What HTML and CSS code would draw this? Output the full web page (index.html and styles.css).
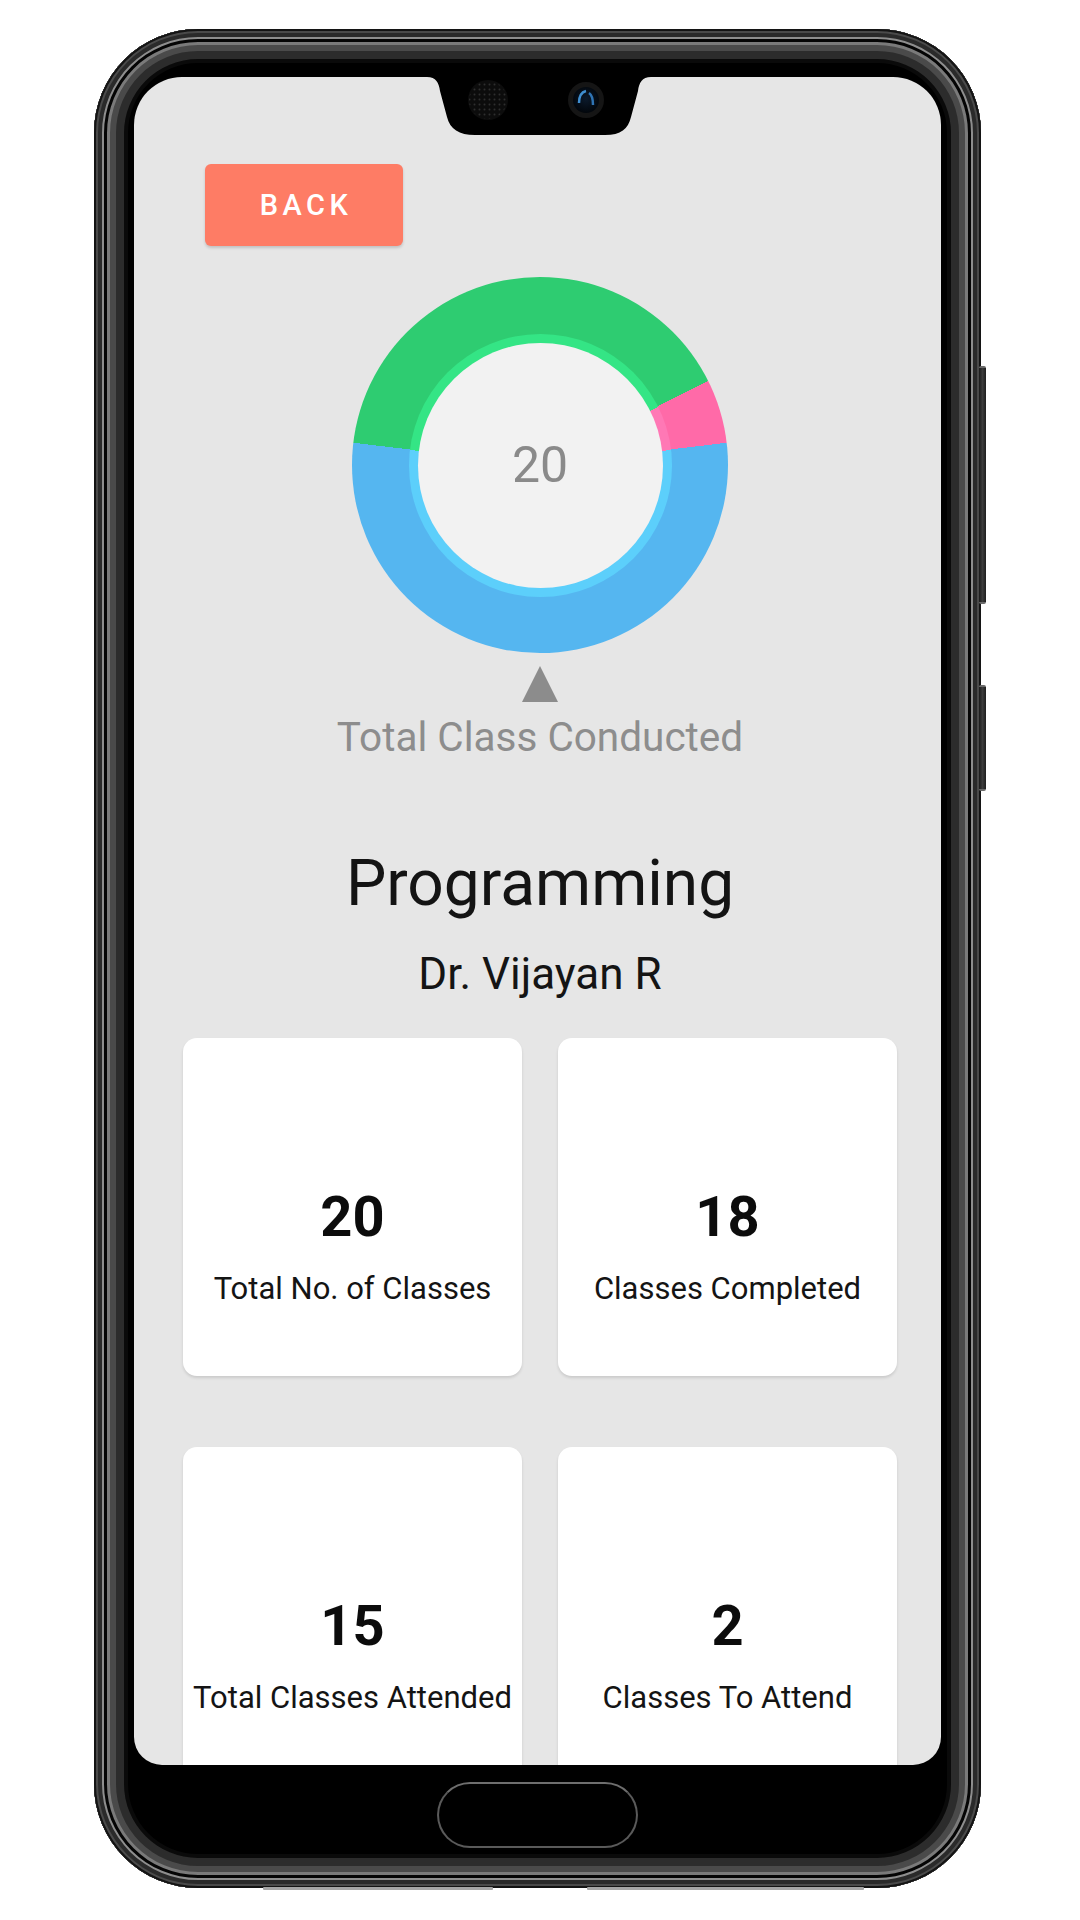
FILE: index.html
```html
<!DOCTYPE html>
<html lang="en">
<head>
<meta charset="utf-8">
<title>Programming - Attendance</title>
<link rel="stylesheet" href="styles.css">
</head>
<body>
<div class="page">
  <div class="phone">
    <span class="side-btn side-btn-long"></span>
    <span class="side-btn side-btn-short"></span>
    <div class="screen">
      <svg class="notch" width="226" height="58" viewBox="0 0 226 58">
        <defs>
          <pattern id="grille" width="5" height="5" patternUnits="userSpaceOnUse">
            <circle cx="2.5" cy="2.5" r="1" fill="#2e2e2e"/>
          </pattern>
          <radialGradient id="lens" cx="50%" cy="45%" r="55%">
            <stop offset="0" stop-color="#0b1a2c"/>
            <stop offset="1" stop-color="#02060b"/>
          </radialGradient>
        </defs>
        <path d="M0 0 C9 0 12 6 13 14 L20 40 C23 52 32 58 48 58 L178 58 C194 58 201 52 204 40 L211 14 C212 6 215 0 224 0 Z" fill="#000"/>
        <circle cx="61" cy="23" r="20" fill="#0c0c0c"/>
        <circle cx="61" cy="23" r="19" fill="url(#grille)"/>
        <circle cx="159" cy="23" r="18" fill="#151515"/>
        <circle cx="159" cy="23" r="13" fill="url(#lens)"/>
        <path d="M152 26 C152 19 155 15 159 14" stroke="#3f8ed0" stroke-width="2.5" fill="none"/>
        <path d="M162 16 C165 18 166 22 166 28" stroke="#2f74b4" stroke-width="2.5" fill="none"/>
      </svg>

      <div class="top-row">
        <button class="back-btn">BACK</button>
      </div>

      <div class="donut">
        <div class="donut-band">
          <div class="donut-hole">20</div>
        </div>
      </div>
      <div class="pointer"></div>
      <div class="chart-label">Total Class Conducted</div>

      <h1 class="subject">Programming</h1>
      <div class="teacher">Dr. Vijayan R</div>

      <div class="cards">
        <div class="card">
          <div class="card-num">20</div>
          <div class="card-label">Total No. of Classes</div>
        </div>
        <div class="card">
          <div class="card-num">18</div>
          <div class="card-label">Classes Completed</div>
        </div>
        <div class="card">
          <div class="card-num">15</div>
          <div class="card-label">Total Classes Attended</div>
        </div>
        <div class="card">
          <div class="card-num">2</div>
          <div class="card-label">Classes To Attend</div>
        </div>
      </div>
    </div>
    <div class="home-btn"></div>
    <span class="grille grille-left"></span>
    <span class="grille grille-right"></span>
  </div>
</div>
</body>
</html>
```

FILE: styles.css
```css
html, body {
  margin: 0;
  padding: 0;
  background: #ffffff;
  width: 1080px;
  height: 1920px;
  overflow: hidden;
  font-family: Roboto, "Liberation Sans", Arial, sans-serif;
}

.page {
  display: flex;
  justify-content: flex-start;
  padding: 29px 0 0 94px;
}

.phone {
  position: relative;
  width: 887px;
  height: 1859px;
  box-sizing: border-box;
  padding: 48px 40px 0 40px;
  border-radius: 104px;
  background: #000;
  display: flex;
  flex-direction: column;
  align-items: center;
  box-shadow:
    inset 0 0 0 2px #141414,
    inset 0 0 0 4px #4a4a4a,
    inset 0 0 0 8px #2a2a2a,
    inset 0 0 0 10px #8e8e8e,
    inset 0 0 0 13px #050505,
    inset 0 0 0 16px #7a7a7a,
    inset 0 0 0 22px #4a4a4a,
    inset 0 0 0 30px #2c2c2c,
    inset 0 0 0 34px #0a0a0a;
}

.side-btn {
  position: absolute;
  right: -5px;
  width: 7px;
  border-radius: 2px;
  background: linear-gradient(90deg, #1a1a1a, #3c3c3c 50%, #1e1e1e);
  border-top: 2px solid #6a6a6a;
  border-bottom: 2px solid #6a6a6a;
  box-sizing: border-box;
}
.side-btn-long { top: 337px; height: 238px; }
.side-btn-short { top: 656px; height: 106px; }

.grille {
  position: absolute;
  bottom: -2px;
  height: 3px;
  background: #a5a5a5;
  border-radius: 1px;
}
.grille-left { left: 169px; width: 230px; }
.grille-right { left: 493px; width: 277px; }

.screen {
  position: relative;
  width: 807px;
  height: 1688px;
  box-sizing: border-box;
  padding-left: 5px;
  flex-shrink: 0;
  background: #e6e6e6;
  border-radius: 48px 48px 28px 28px;
  overflow: hidden;
  display: flex;
  flex-direction: column;
  align-items: center;
}

.screen > * {
  flex-shrink: 0;
}

.notch {
  position: absolute;
  top: 0;
  left: 293px;
}

.top-row {
  align-self: stretch;
  padding-left: 66px;
  margin-top: 87px;
}

.back-btn {
  width: 198px;
  height: 82px;
  border: none;
  border-radius: 6px;
  background: #fe7c65;
  color: #ffffff;
  font-family: Roboto, "Liberation Sans", sans-serif;
  font-size: 29px;
  font-weight: 500;
  letter-spacing: 4.5px;
  padding: 0 0 0 4px;
  box-shadow: 0 2px 3px rgba(0, 0, 0, 0.16);
}

.donut {
  margin-top: 31px;
  width: 376px;
  height: 376px;
  border-radius: 50%;
  background: conic-gradient(
    #2ecc71 0deg 63.5deg,
    #ff6aa8 63.5deg 83.2deg,
    #55b6f0 83.2deg 276.8deg,
    #2ecc71 276.8deg 360deg);
  display: flex;
  align-items: center;
  justify-content: center;
}

.donut-band {
  width: 263px;
  height: 263px;
  border-radius: 50%;
  background: conic-gradient(
    #34e585 0deg 63.5deg,
    #ff78b5 63.5deg 83.2deg,
    #5ccffb 83.2deg 276.8deg,
    #34e585 276.8deg 360deg);
  display: flex;
  align-items: center;
  justify-content: center;
}

.donut-hole {
  width: 245px;
  height: 245px;
  border-radius: 50%;
  background: #f2f2f2;
  color: #8a8a8a;
  font-size: 50px;
  display: flex;
  align-items: center;
  justify-content: center;
}

.pointer {
  margin-top: 13px;
  width: 0;
  height: 0;
  border-left: 18px solid transparent;
  border-right: 18px solid transparent;
  border-bottom: 36px solid #8c8c8c;
}

.chart-label {
  margin-top: 11px;
  font-size: 40.5px;
  color: #8d8d8d;
  line-height: normal;
}

.subject {
  margin: 85px 0 0 0;
  font-size: 64px;
  font-weight: 400;
  color: #141414;
  line-height: normal;
}

.teacher {
  margin-top: 27px;
  font-size: 44px;
  color: #141414;
  line-height: normal;
}

.cards {
  margin-top: 38px;
  display: grid;
  grid-template-columns: 339px 339px;
  column-gap: 36px;
  row-gap: 71px;
}

.card {
  height: 338px;
  box-sizing: border-box;
  padding-top: 146px;
  background: #ffffff;
  border-radius: 14px;
  box-shadow: 0 2px 3px rgba(0, 0, 0, 0.12);
  display: flex;
  flex-direction: column;
  align-items: center;
}

.card-num {
  font-size: 56px;
  font-weight: 700;
  color: #0c0c0c;
  line-height: normal;
}

.card-label {
  margin-top: 20px;
  font-size: 31px;
  color: #141414;
  line-height: normal;
  white-space: nowrap;
}

.home-btn {
  margin-top: 17px;
  width: 201px;
  height: 66px;
  box-sizing: border-box;
  border-radius: 33px;
  border: 2px solid #5a5a5a;
  border-top-color: #6e6e6e;
  background: #000;
}
```
